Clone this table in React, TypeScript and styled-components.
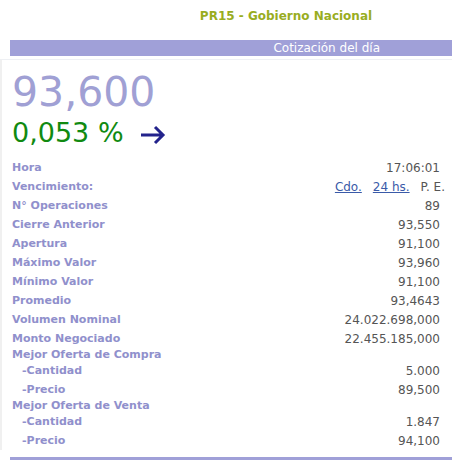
import { createGlobalStyle, styled } from "styled-components";

const GlobalStyle = createGlobalStyle`
  html, body {
    margin: 0;
    padding: 0;
    background: #fff;
  }
  body {
    font-family: "DejaVu Sans", Verdana, sans-serif;
  }
`;

type Row = {
  label: string;
  value?: string;
  indent?: boolean;
  compact?: boolean;
  links?: boolean;
};

const rows: Row[] = [
  { label: "Hora", value: "17:06:01" },
  { label: "Vencimiento:", links: true },
  { label: "N° Operaciones", value: "89" },
  { label: "Cierre Anterior", value: "93,550" },
  { label: "Apertura", value: "91,100" },
  { label: "Máximo Valor", value: "93,960" },
  { label: "Mínimo Valor", value: "91,100" },
  { label: "Promedio", value: "93,4643" },
  { label: "Volumen Nominal", value: "24.022.698,000" },
  { label: "Monto Negociado", value: "22.455.185,000" },
  { label: "Mejor Oferta de Compra", compact: true },
  { label: "-Cantidad", value: "5.000", indent: true },
  { label: "-Precio", value: "89,500", indent: true },
  { label: "Mejor Oferta de Venta", compact: true },
  { label: "-Cantidad", value: "1.847", indent: true },
  { label: "-Precio", value: "94,100", indent: true },
];

const Quote = () => {
  return (
    <Page>
      <GlobalStyle />
      <Title>PR15 - Gobierno Nacional</Title>
      <Bar>Cotización del día</Bar>
      <Body>
        <Price>93,600</Price>
        <Change>
          0,053 %
          <svg width="26" height="20" viewBox="0 0 26 20">
            <path
              d="M1 10 H23 M15 2 L23 10 L15 18"
              fill="none"
              stroke="#23238c"
              strokeWidth="3"
            />
          </svg>
        </Change>
        <Table>
          {rows.map((r, i) => (
            <Line key={i} $compact={r.compact}>
              <Label $indent={r.indent}>{r.label}</Label>
              {r.links ? (
                <Links>
                  <A href="#">Cdo.</A>
                  <A href="#">24 hs.</A>
                  <span>P. E.</span>
                </Links>
              ) : (
                <Value>{r.value}</Value>
              )}
            </Line>
          ))}
        </Table>
      </Body>
      <Foot />
    </Page>
  );
};

const Page = styled.div`
  width: 452px;
  height: 460px;
  overflow: hidden;
  padding-top: 8px;
  box-sizing: border-box;
`;

const Title = styled.div`
  text-align: center;
  padding-left: 120px;
  font-size: 12px;
  font-weight: bold;
  color: #99ad1f;
  height: 16px;
  line-height: 16px;
`;

const Bar = styled.div`
  margin: 16px 0 0 10px;
  height: 16px;
  line-height: 16px;
  background: #a0a0d8;
  color: #fff;
  font-size: 12px;
  text-align: right;
  padding-right: 72px;
`;

const Body = styled.div`
  margin-top: 3px;
  border-top: 1px solid #eef0f4;
  border-left: 2px solid #f0f0f0;
  padding-left: 10px;
  padding-right: 12px;
`;

const Price = styled.div`
  font-size: 41px;
  color: #a0a0d4;
  line-height: 46px;
  margin-top: 9px;
`;

const Change = styled.div`
  display: flex;
  align-items: center;
  gap: 16px;
  font-size: 27px;
  color: #118a11;
  line-height: 32px;
  margin-top: 2px;
  svg {
    margin-top: 3px;
  }
`;

const Table = styled.div`
  margin-top: 9px;
  display: flex;
  flex-direction: column;
`;

const Line = styled.div<{ $compact?: boolean }>`
  display: flex;
  justify-content: space-between;
  align-items: center;
  height: ${(p) => (p.$compact ? 13 : 19)}px;
`;

const Label = styled.span<{ $indent?: boolean }>`
  font-size: 11px;
  font-weight: bold;
  color: #9090cc;
  padding-left: ${(p) => (p.$indent ? 10 : 0)}px;
`;

const Value = styled.span`
  font-size: 12px;
  color: #555;
`;

const Links = styled(Value)`
  display: flex;
  gap: 11px;
  margin-right: -5px;
`;

const A = styled.a`
  color: #3a5aa8;
  text-decoration: underline;
`;

const Foot = styled.div`
  margin: 7px 0 0 10px;
  height: 3px;
  background: #a0a0d8;
`;

export default Quote;
